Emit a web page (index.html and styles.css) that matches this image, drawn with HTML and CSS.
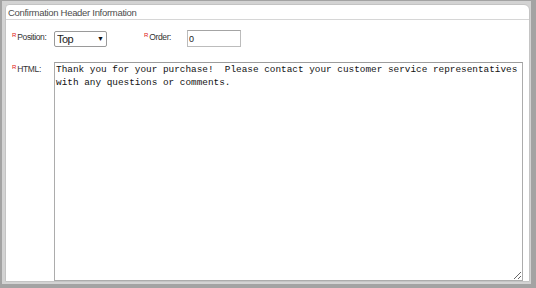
FILE: index.html
```html
<!DOCTYPE html>
<html lang="en">
<head>
    <meta charset="UTF-8">
    <title>Confirmation Header Information</title>
    <link rel="stylesheet" href="styles.css">
</head>
<body>

<div class="window">
    <div class="panel">
        <div class="panel-title">Confirmation Header Information</div>

        <div class="form-row">
            <label class="field-label" for="position"><span class="req">R</span>Position:</label>
            <div class="select-wrap">
                <select id="position">
                    <option>Top</option>
                    <option>Bottom</option>
                </select>
                <span class="select-arrow">&#9660;</span>
            </div>

            <label class="field-label order-label" for="order"><span class="req">R</span>Order:</label>
            <input type="text" id="order" value="0">
        </div>

        <div class="form-row html-row">
            <label class="field-label" for="html"><span class="req">R</span>HTML:</label>
            <textarea id="html">Thank you for your purchase!  Please contact your customer service representatives with any questions or comments.</textarea>
        </div>
    </div>
</div>

</body>
</html>
```

FILE: styles.css
```css
* {
    box-sizing: border-box;
}
body {
    margin: 0;
    height: 288px;
    padding: 1px 5px 4px 2px;
    background-color: #a3a3a3;
    font-family: "Liberation Sans", Arial, sans-serif;
    color: #333;
}
.window {
    height: 283px;
    padding: 3px 1px 2px 3px;
    background-color: #d3d3d3;
}
.panel {
    height: 278px;
    background-color: #ffffff;
    border: 1px solid #c4c4c4;
    border-radius: 4px 6px 0 0;
}
.panel-title {
    height: 15px;
    padding: 2px 0 0 2px;
    border-bottom: 1px solid #d6d6d6;
    font-size: 9.5px;
    letter-spacing: -0.3px;
    line-height: 12px;
    color: #4d4d4d;
}
.form-row {
    display: flex;
    align-items: flex-start;
    margin-top: 10px;
    padding-left: 6px;
}
.field-label {
    width: 42px;
    flex-shrink: 0;
    padding-top: 2px;
    font-size: 8.5px;
    letter-spacing: -0.4px;
    line-height: 11px;
    color: #333;
}
.req {
    font-size: 6px;
    line-height: 6px;
    letter-spacing: 0;
    vertical-align: top;
    color: #e01010;
    margin-right: 1px;
}
.select-wrap {
    position: relative;
    margin-top: 1px;
}
select {
    display: block;
    appearance: none;
    -webkit-appearance: none;
    width: 53px;
    height: 16px;
    padding: 0 0 0 2px;
    border: 1px solid #9a9a9a;
    border-radius: 2px;
    background-color: #ffffff;
    font-family: "Liberation Sans", Arial, sans-serif;
    font-size: 11px;
    letter-spacing: -0.5px;
    color: #222;
}
.select-arrow {
    position: absolute;
    top: 4px;
    left: 43px;
    font-size: 7px;
    line-height: 8px;
    color: #111;
    pointer-events: none;
}
.order-label {
    width: 43px;
    margin-left: 37px;
}
input[type="text"] {
    display: block;
    width: 54px;
    height: 17px;
    padding: 0 0 0 1px;
    border: 1px solid #bcbcbc;
    border-top-color: #a4a4a4;
    font-family: "Liberation Sans", Arial, sans-serif;
    font-size: 9px;
    color: #222;
}
.html-row {
    margin-top: 15px;
}
textarea {
    display: block;
    width: 469px;
    height: 219px;
    margin: 0;
    padding: 0 1px;
    border: 1px solid #acacac;
    border-top-color: #9c9c9c;
    font-family: "Liberation Mono", "Courier New", monospace;
    font-size: 9.4px;
    line-height: 13px;
    color: #111;
}
```
